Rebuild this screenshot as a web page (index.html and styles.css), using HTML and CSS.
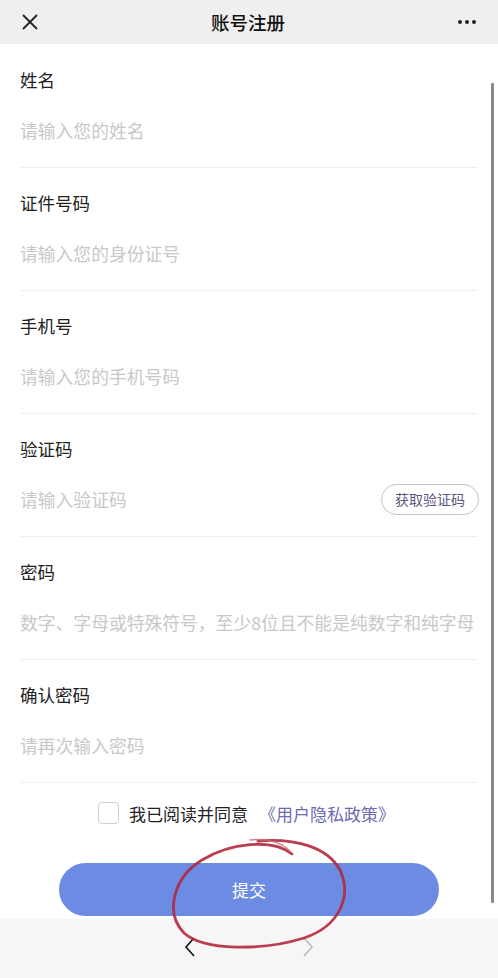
FILE: index.html
```html
<!DOCTYPE html>
<html lang="zh">
<head>
<meta charset="utf-8">
<title>账号注册</title>
<link rel="stylesheet" href="styles.css">
</head>
<body>
<div class="page">
  <header class="topbar">
    <svg class="icon-close" width="18" height="18" viewBox="0 0 18 18"><path d="M2 2 L16 16 M16 2 L2 16" stroke="#222" stroke-width="1.8" fill="none"/></svg>
    <div class="title">账号注册</div>
    <svg class="icon-more" width="20" height="6" viewBox="0 0 20 6"><circle cx="3" cy="3" r="2" fill="#222"/><circle cx="10" cy="3" r="2" fill="#222"/><circle cx="17" cy="3" r="2" fill="#222"/></svg>
  </header>

  <main class="form">
    <div class="field">
      <div class="label">姓名</div>
      <div class="placeholder">请输入您的姓名</div>
    </div>
    <div class="field">
      <div class="label">证件号码</div>
      <div class="placeholder">请输入您的身份证号</div>
    </div>
    <div class="field">
      <div class="label">手机号</div>
      <div class="placeholder">请输入您的手机号码</div>
    </div>
    <div class="field">
      <div class="label">验证码</div>
      <div class="placeholder row">
        <span>请输入验证码</span>
        <span class="code-btn">获取验证码</span>
      </div>
    </div>
    <div class="field">
      <div class="label">密码</div>
      <div class="placeholder">数字、字母或特殊符号，至少8位且不能是纯数字和纯字母</div>
    </div>
    <div class="field">
      <div class="label">确认密码</div>
      <div class="placeholder">请再次输入密码</div>
    </div>

    <div class="agree">
      <span class="checkbox"></span>
      <span class="agree-text">我已阅读并同意</span>
      <span class="link">《用户隐私政策》</span>
    </div>

    <div class="submit">提交</div>
  </main>

  <footer class="bottombar">
    <svg width="12" height="20" viewBox="0 0 12 20"><path d="M10 1 L2 10 L10 19" stroke="#111" stroke-width="1.6" fill="none"/></svg>
    <svg width="12" height="20" viewBox="0 0 12 20"><path d="M2 1 L10 10 L2 19" stroke="#bbb" stroke-width="1.6" fill="none"/></svg>
  </footer>

  <div class="scrollbar"></div>

  <svg class="scribble" width="498" height="978" viewBox="0 0 498 978">
    <path d="M292 854 C272 838 230 843 202 860 C174 877 164 912 184 933 C204 951 262 951 304 938 C340 926 352 896 340 870 C328 848 298 838 258 841" stroke="#b3283e" stroke-width="2.8" fill="none" stroke-linecap="round" opacity="0.9"/>
    <path d="M250 840 C268 838 282 843 290 851" stroke="#c56a78" stroke-width="1.6" fill="none" stroke-linecap="round" opacity="0.8"/>
  </svg>
</div>
</body>
</html>
```

FILE: styles.css
```css
* { box-sizing: border-box; }
html, body {
  margin: 0;
  padding: 0;
  background: #ffffff;
  font-family: "Noto Sans CJK SC", "Noto Sans", sans-serif;
}
.page {
  position: relative;
  width: 498px;
  height: 978px;
  overflow: hidden;
  display: flex;
  flex-direction: column;
}
.topbar {
  height: 44px;
  background: #efefef;
  display: flex;
  align-items: center;
  justify-content: space-between;
  padding: 0 21px 0 21px;
  flex-shrink: 0;
}
.icon-close { display: block; margin-top: -1px; }
.icon-more { display: block; }
.title {
  font-size: 18.5px;
  color: #111;
  font-weight: 500;
  line-height: 24px;
  margin-left: 0;
}
.form {
  padding: 1px 20px 0 20px;
  flex: 1;
  display: flex;
  flex-direction: column;
}
.field {
  height: 123px;
  padding: 23px 0 25px 0;
  border-bottom: 1px solid #efefef;
  display: flex;
  flex-direction: column;
  gap: 26px;
  margin-right: 1px;
}
.label {
  font-size: 17.5px;
  line-height: 24px;
  color: #222;
}
.placeholder {
  font-size: 17.8px;
  line-height: 24px;
  color: #c8c8c8;
  white-space: nowrap;
}
.row {
  display: flex;
  align-items: center;
  justify-content: space-between;
  height: 24px;
}
.code-btn {
  font-size: 14px;
  color: #5c5880;
  border: 1px solid #c4c4c4;
  border-radius: 16px;
  height: 31px;
  line-height: 29px;
  padding: 0 13px;
  margin-right: -2px;
  flex-shrink: 0;
}
.agree {
  display: flex;
  align-items: center;
  justify-content: flex-start;
  height: 24px;
  margin-top: 18px;
  padding-left: 78px;
}
.checkbox {
  width: 21px;
  height: 22px;
  border: 1px solid #cfcfcf;
  border-radius: 4px;
  background: #fff;
  margin-right: 10px;
}
.agree-text {
  font-size: 17px;
  color: #222;
  margin-right: 11px;
}
.link {
  font-size: 17px;
  color: #6c6cb0;
}
.submit {
  margin: 38px 39px 0 39px;
  height: 53px;
  border-radius: 27px;
  background: #6b8ce2;
  color: #ffffff;
  font-size: 17px;
  display: flex;
  align-items: center;
  justify-content: center;
}
.bottombar {
  height: 59px;
  background: #f6f6f6;
  display: flex;
  align-items: center;
  justify-content: center;
  gap: 106px;
  padding-bottom: 1px;
  flex-shrink: 0;
}
.bottombar svg { display: block; margin-top: -2px; }
.scrollbar {
  position: absolute;
  left: 491px;
  top: 83px;
  width: 3px;
  height: 820px;
  background: #8a8a8a;
  border-radius: 1px;
}
.scribble {
  position: absolute;
  left: 0;
  top: 0;
  pointer-events: none;
}
```
